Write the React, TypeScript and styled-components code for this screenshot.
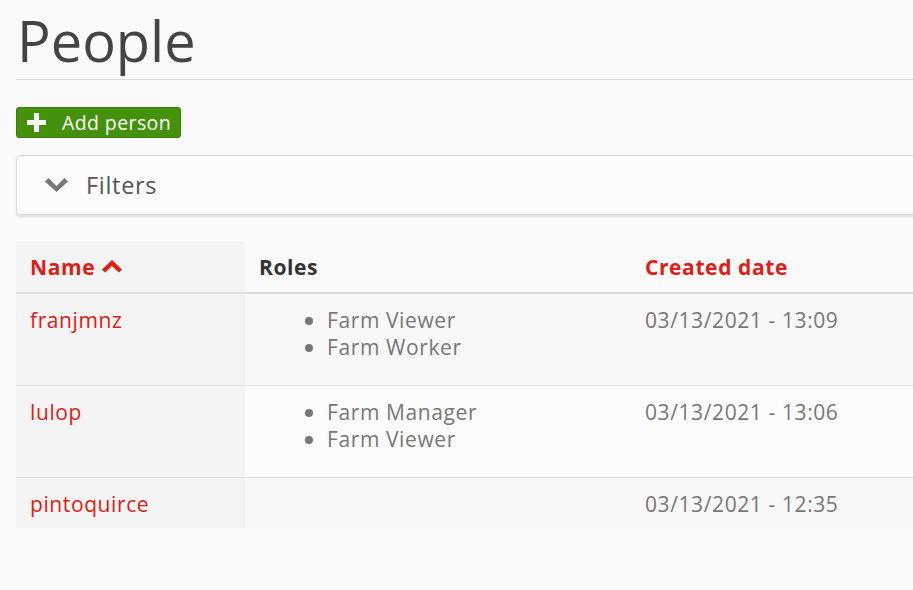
import React from "react";
import styled, { createGlobalStyle } from "styled-components";

const Global = createGlobalStyle`
  html, body { margin: 0; padding: 0; background: #fafafa; overflow: hidden; }
  body { font-family: "Open Sans", "Noto Sans", sans-serif; color: #333; }
`;

const Page = styled.div`
  width: 1000px;
  padding: 0 0 0 16px;
  box-sizing: border-box;
`;

const TitleBar = styled.div`
  padding-top: 12px;
  padding-bottom: 11px;
  border-bottom: 1px solid #dcdcdc;
`;

const Title = styled.h1`
  margin: 0;
  font-size: 56px;
  line-height: 56px;
  font-weight: 400;
  color: #444;
  padding-left: 1px;
`;

const Actions = styled.div`
  padding-top: 27px;
  display: flex;
`;

const AddButton = styled.button`
  display: inline-flex;
  align-items: center;
  gap: 16px;
  height: 31px;
  padding: 0 9px 0 10px;
  background: #44910b;
  border: 1px solid #3a7d08;
  border-radius: 3px;
  color: #fff;
  font-family: "Open Sans", sans-serif;
  font-size: 19.5px;
  letter-spacing: 0.4px;
  cursor: pointer;
`;

const FilterBox = styled.div`
  margin-top: 17px;
  height: 58px;
  border: 1px solid #dadada;
  border-radius: 4px;
  background: #fcfcfc;
  box-shadow: 0 2px 2px rgba(0, 0, 0, 0.1);
  display: flex;
  align-items: center;
  gap: 18px;
  padding-left: 28px;
`;

const FilterLabel = styled.span`
  font-size: 23.5px;
  letter-spacing: 0.7px;
  color: #555;
`;

const Table = styled.table`
  margin-top: 26px;
  border-collapse: collapse;
  width: 984px;
  font-size: 21px;
  letter-spacing: 0.6px;
`;

const Th = styled.th<{ $sorted?: boolean; $active?: boolean; $w?: number }>`
  text-align: left;
  font-weight: 700;
  font-size: 21px;
  letter-spacing: 0.6px;
  height: 51px;
  padding: 0 14px;
  color: ${(p) => (p.$active ? "#dd2015" : "#333")};
  background: ${(p) => (p.$sorted ? "#f4f4f4" : "transparent")};
  border-bottom: 2px solid #dedede;
  width: ${(p) => (p.$w ? `${p.$w - 28}px` : "auto")};
  vertical-align: middle;
`;

const Tr = styled.tr<{ $odd: boolean }>`
  background: ${(p) => (p.$odd ? "#f8f8f8" : "#fcfcfc")};
  border-bottom: 1px solid #e0e0e0;
  &:last-child { border-bottom: none; }
`;

const Td = styled.td<{ $sorted?: boolean }>`
  padding: 13px 14px 10px;
  vertical-align: top;
  line-height: 27px;
  color: #777;
  background: ${(p) => (p.$sorted ? "#f4f4f4" : "transparent")};
`;

const NameLink = styled.a`
  color: #dd2015;
  text-decoration: none;
`;

const RoleList = styled.ul`
  margin: 0 0 14px 0;
  padding-left: 46px;
  list-style: none;
  color: #777;
`;

const RoleItem = styled.li`
  display: flex;
  align-items: center;
  gap: 14px;
  &::before {
    content: "";
    width: 8px;
    height: 8px;
    border-radius: 50%;
    background: #777;
    margin-top: 1px;
  }
`;

const HeaderLabel = styled.span`
  display: inline-flex;
  align-items: center;
  gap: 7px;
`;

const Plus = () => (
  <svg width="19" height="19" viewBox="0 0 19 19">
    <path d="M7 0h5v7h7v5h-7v7H7v-7H0V7h7z" fill="#fff" />
  </svg>
);

const ChevronDown = () => (
  <svg width="23" height="14" viewBox="0 0 23 14">
    <path d="M0 3.5L3.5 0 11.5 8 19.5 0 23 3.5 11.5 14z" fill="#777" />
  </svg>
);

const ChevronUp = () => (
  <svg width="20" height="13" viewBox="0 0 20 13">
    <path d="M0 9.5L10 0 20 9.5 16.8 12.6 10 6 3.2 12.6z" fill="#dd2015" />
  </svg>
);

const people = [
  { name: "franjmnz", roles: ["Farm Viewer", "Farm Worker"], date: "03/13/2021 - 13:09" },
  { name: "lulop", roles: ["Farm Manager", "Farm Viewer"], date: "03/13/2021 - 13:06" },
  { name: "pintoquirce", roles: [], date: "03/13/2021 - 12:35" },
];

export default function App() {
  return (
    <Page>
      <Global />
      <TitleBar>
        <Title>People</Title>
      </TitleBar>
      <Actions>
        <AddButton>
          <Plus />
          Add person
        </AddButton>
      </Actions>
      <FilterBox>
        <ChevronDown />
        <FilterLabel>Filters</FilterLabel>
      </FilterBox>
      <Table>
        <thead>
          <tr>
            <Th $sorted $active $w={229}>
              <HeaderLabel>
                Name<ChevronUp />
              </HeaderLabel>
            </Th>
            <Th $w={386}>Roles</Th>
            <Th $active>Created date</Th>
          </tr>
        </thead>
        <tbody>
          {people.map((p, i) => (
            <Tr key={p.name} $odd={i % 2 === 0}>
              <Td $sorted>
                <NameLink href="#">{p.name}</NameLink>
              </Td>
              <Td>
                {p.roles.length > 0 && (
                  <RoleList>
                    {p.roles.map((r) => (
                      <RoleItem key={r}>{r}</RoleItem>
                    ))}
                  </RoleList>
                )}
              </Td>
              <Td>{p.date}</Td>
            </Tr>
          ))}
        </tbody>
      </Table>
    </Page>
  );
}
